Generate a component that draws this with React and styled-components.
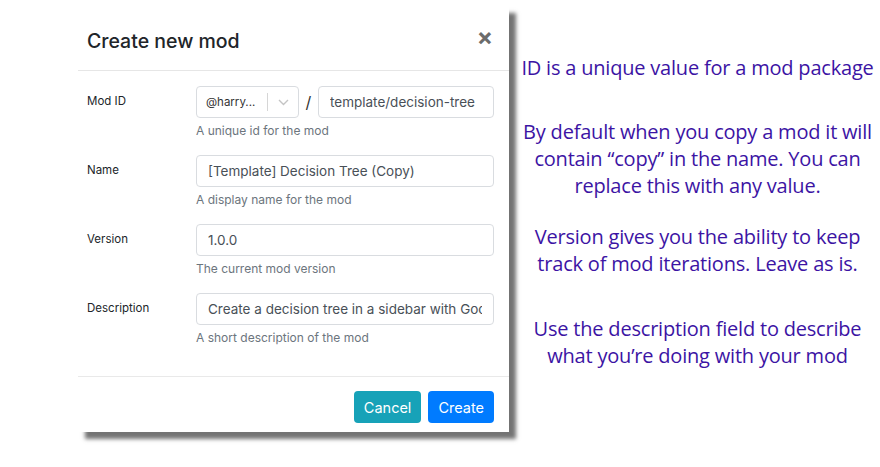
import styled, { createGlobalStyle } from "styled-components";

const Global = createGlobalStyle`
  body {
    margin: 0;
    background: #fff;
  }
`;

const Page = styled.div`
  width: 880px;
  height: 467px;
  display: flex;
  align-items: flex-start;
  padding: 6px 0 0 78px;
  box-sizing: border-box;
  overflow: hidden;
`;

const Modal = styled.div`
  width: 431px;
  flex: 0 0 auto;
  background: #fff;
  box-shadow: 7px 7px 4px rgba(0, 0, 0, 0.55);
  font-family: Inter, "Liberation Sans", sans-serif;
  color: #212529;
`;

const Header = styled.div`
  height: 65px;
  display: flex;
  align-items: center;
  justify-content: space-between;
  padding: 0 16px 0 9px;
  border-bottom: 1px solid #e6e6e6;
  box-sizing: border-box;
`;

const Title = styled.h5`
  margin: 0;
  font-size: 19.5px;
  font-weight: 500;
  padding-top: 6px;
`;

const Close = styled.span`
  font-size: 24px;
  font-weight: 700;
  color: #6b6b6b;
  line-height: 1;
  margin-top: -3px;
`;

const Body = styled.div`
  padding: 15px 15px 14px 9px;
  border-bottom: 1px solid #e9e9e9;
`;

const Row = styled.div`
  display: flex;
  margin-bottom: 16px;
`;

const Label = styled.div`
  width: 109px;
  flex: 0 0 auto;
  font-size: 11.5px;
  padding-top: 8px;
`;

const Field = styled.div`
  flex: 1;
  min-width: 0;
  display: flex;
  flex-direction: column;
`;

const Inline = styled.div`
  display: flex;
  align-items: center;
`;

const Input = styled.input`
  height: 32px;
  box-sizing: border-box;
  border: 1px solid #d9dce0;
  border-radius: 4px;
  padding: 0 11px;
  font-family: Inter, "Liberation Sans", sans-serif;
  font-size: 13.5px;
  color: #495057;
  background: #fff;
  outline: none;
  flex: ${(p) => (p.$grow ? "1 1 0" : "none")};
  width: ${(p) => (p.$grow ? "auto" : "100%")};
  min-width: 0;
`;

const Select = styled.div`
  width: 103px;
  height: 32px;
  flex: none;
  box-sizing: border-box;
  border: 1px solid #d9dce0;
  border-radius: 4px;
  display: flex;
  align-items: center;
  padding-left: 9px;
  font-size: 11.5px;
  color: #333;
`;

const SelectValue = styled.span`
  flex: 1;
`;

const SelectSep = styled.span`
  width: 1px;
  height: 18px;
  background: #d6d6d6;
`;

const Chevron = styled.span`
  width: 30px;
  display: flex;
  justify-content: center;
`;

const Slash = styled.span`
  width: 19px;
  flex: none;
  text-align: center;
  font-size: 16px;
  color: #333;
`;

const Help = styled.div`
  margin-top: 5px;
  font-size: 12px;
  line-height: 16px;
  color: #6c757d;
`;

const Footer = styled.div`
  display: flex;
  justify-content: flex-end;
  gap: 7px;
  padding: 14px 15px 9px;
`;

const Button = styled.button`
  height: 32px;
  padding: 0 10px;
  border: none;
  border-radius: 4px;
  background: ${(p) => p.$bg};
  color: #fff;
  font-family: Inter, "Liberation Sans", sans-serif;
  font-size: 14.5px;
`;

const Notes = styled.div`
  flex: 1;
  padding: 0 4px 0 10px;
  font-family: "Open Sans", "Noto Sans", sans-serif;
  color: #3c14a4;
  text-align: center;
  font-size: 20px;
  line-height: 27px;
  white-space: nowrap;
`;

const Note = styled.p`
  margin: ${(p) => p.$top}px 0 0;
  letter-spacing: -0.2px;
`;

const rows = [
  { label: "Name", value: "[Template] Decision Tree (Copy)", help: "A display name for the mod" },
  { label: "Version", value: "1.0.0", help: "The current mod version" },
  { label: "Description", value: "Create a decision tree in a sidebar with Google Sheets", help: "A short description of the mod" },
];

export default function App() {
  return (
    <Page>
      <Global />
      <Modal>
        <Header>
          <Title>Create new mod</Title>
          <Close>×</Close>
        </Header>
        <Body>
          <Row>
            <Label>Mod ID</Label>
            <Field>
              <Inline>
                <Select>
                  <SelectValue>@harry...</SelectValue>
                  <SelectSep />
                  <Chevron>
                    <svg width="11" height="7" viewBox="0 0 11 7">
                      <path d="M1 1l4.5 4.5L10 1" fill="none" stroke="#c4c4c4" strokeWidth="1.4" />
                    </svg>
                  </Chevron>
                </Select>
                <Slash>/</Slash>
                <Input $grow readOnly defaultValue="template/decision-tree" />
              </Inline>
              <Help>A unique id for the mod</Help>
            </Field>
          </Row>
          {rows.map((r) => (
            <Row key={r.label}>
              <Label>{r.label}</Label>
              <Field>
                <Input readOnly defaultValue={r.value} />
                <Help>{r.help}</Help>
              </Field>
            </Row>
          ))}
        </Body>
        <Footer>
          <Button $bg="#17a2b8">Cancel</Button>
          <Button $bg="#007bff">Create</Button>
        </Footer>
      </Modal>
      <Notes>
        <Note $top={48}>ID is a unique value for a mod package</Note>
        <Note $top={37}>
          By default when you copy a mod it will
          <br />
          contain “copy” in the name. You can
          <br />
          replace this with any value.
        </Note>
        <Note $top={24}>
          Version gives you the ability to keep
          <br />
          track of mod iterations. Leave as is.
        </Note>
        <Note $top={38}>
          Use the description field to describe
          <br />
          what you’re doing with your mod
        </Note>
      </Notes>
    </Page>
  );
}
